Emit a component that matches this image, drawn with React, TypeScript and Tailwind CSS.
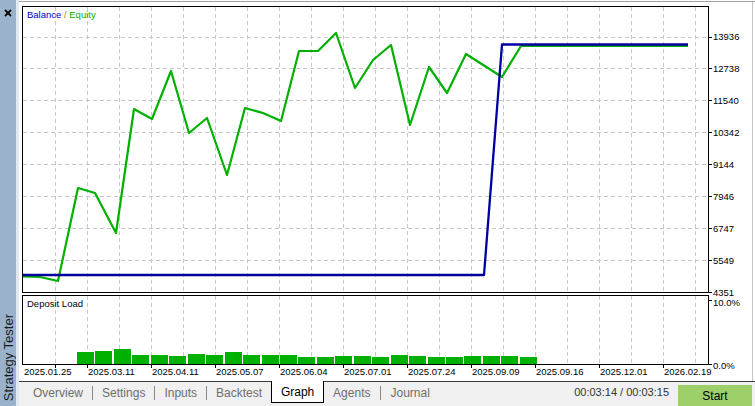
import React from "react";

const FONT = "'Liberation Sans', Arial, sans-serif";

const priceLabels = ["13936", "12738", "11540", "10342", "9144", "7946", "6747", "5549", "4351"];
const dates = [
  "2025.01.25",
  "2025.03.11",
  "2025.04.11",
  "2025.05.07",
  "2025.06.04",
  "2025.07.01",
  "2025.07.24",
  "2025.09.09",
  "2025.09.16",
  "2025.12.01",
  "2026.02.19",
];

const equity: [number, number][] = [
  [23, 276.5], [40, 277], [58, 281], [78, 188], [95, 193], [116, 233], [134, 109],
  [152, 119], [171, 71], [189, 133], [207, 118], [227, 175], [245, 108], [263, 113],
  [281, 121], [299, 51], [318, 51], [336, 33], [355, 88], [373, 60], [391, 45],
  [410, 125], [429, 67], [447, 93], [466, 54], [502, 77], [521, 46], [688, 46],
];

const balance: [number, number][] = [[23, 275], [484, 275], [502, 44.5], [688, 44.5]];

// top y of each deposit load bar, bottom sits on the frame
const loadTops = [
  352, 351, 349, 355, 355, 356, 354, 355, 352, 355, 355, 355, 357, 357, 356, 356, 357,
  355, 356, 357, 357, 356, 356, 356, 357,
];

const tickY = (i: number) => 36.5 + 31.95 * i;
const pts = (p: [number, number][]) => p.map(([x, y]) => `${x},${y}`).join(" ");

function Chart() {
  const vGrid: number[] = [];
  for (let x = 55.5; x < 708; x += 32) vGrid.push(x);

  return (
    <svg width={733} height={379} viewBox="19 2 733 379" style={{ fontFamily: FONT }}>
      {/* grid main */}
      <g stroke="#c8c8c8" strokeDasharray="4 3" shapeRendering="crispEdges">
        {priceLabels.slice(0, 8).map((_, i) => (
          <line key={i} x1={23} x2={708} y1={Math.round(tickY(i)) + 0.5} y2={Math.round(tickY(i)) + 0.5} />
        ))}
        {vGrid.map((x) => (
          <line key={"v" + x} x1={x} x2={x} y1={7} y2={292} />
        ))}
        {vGrid.map((x) => (
          <line key={"d" + x} x1={x} x2={x} y1={296} y2={364} />
        ))}
      </g>

      {/* lines */}
      <polyline points={pts(equity)} fill="none" stroke="#00b000" strokeWidth={2.2} strokeLinejoin="round" />
      <polyline points={pts(balance)} fill="none" stroke="#0000a0" strokeWidth={2.3} strokeLinejoin="round" />

      {/* deposit load bars */}
      <g fill="#00b000" shapeRendering="crispEdges">
        {loadTops.map((t, i) => {
          const x = Math.round(77 + 18.45 * i);
          return <rect key={i} x={x} y={t} width={17} height={364 - t} />;
        })}
      </g>

      {/* frames */}
      <g fill="none" stroke="#000" shapeRendering="crispEdges">
        <rect x={22.5} y={6.5} width={686} height={286} />
        <rect x={22.5} y={295.5} width={686} height={69} />
        {priceLabels.map((_, i) => (
          <line key={i} x1={708} x2={712} y1={Math.round(tickY(i)) + 0.5} y2={Math.round(tickY(i)) + 0.5} />
        ))}
        <line x1={708} x2={712} y1={300.5} y2={300.5} />
        <line x1={708} x2={712} y1={364.5} y2={364.5} />
        <line x1={55.5} x2={55.5} y1={365} y2={368} />
        {dates.slice(1).map((_, i) => (
          <line key={"t" + i} x1={87.5 + 64 * i} x2={87.5 + 64 * i} y1={365} y2={368} />
        ))}
      </g>

      {/* texts */}
      <text x={27} y={17.5} fontSize={9.5}>
        <tspan fill="#0000c8">Balance</tspan>
        <tspan fill="#c87800"> / </tspan>
        <tspan fill="#00b000">Equity</tspan>
      </text>
      <text x={27} y={306.5} fontSize={9.5} fill="#000">
        Deposit Load
      </text>
      <g fontSize={9.5} fill="#000">
        {priceLabels.map((p, i) => (
          <text key={p} x={713} y={tickY(i) + 3.5}>
            {p}
          </text>
        ))}
        <text x={713} y={305.5}>10.0%</text>
        <text x={713} y={369}>0.0%</text>
        {dates.map((d, i) => (
          <text key={d} x={24 + 64 * i} y={374.5}>
            {d}
          </text>
        ))}
      </g>
    </svg>
  );
}

function Sep() {
  return <span className="h-[14px] w-px bg-[#8a8a8a]" />;
}

export default function App() {
  return (
    <div
      className="flex h-[406px] w-[755px] overflow-hidden bg-white"
      style={{ fontFamily: FONT }}
    >
      <aside className="flex w-4 flex-col items-center justify-between bg-[#9bb2cd] pb-[5px] pt-[9px]">
        <svg width={8} height={8} viewBox="0 0 8 8">
          <path d="M1 1L7 7M7 1L1 7" stroke="#000" strokeWidth={1.8} />
        </svg>
        <span className="rotate-180 text-[13px] leading-none text-[#1a1a1a] [writing-mode:vertical-rl]">
          Strategy Tester
        </span>
      </aside>
      <div className="w-[3px] bg-[#e1e8f0]" />
      <div className="flex flex-1 flex-col">
        <div className="mt-px h-px bg-[#a0a0a0]" />
        <div className="mr-[2px] flex h-[379px] border-r border-[#c4c4c4]">
          <Chart />
        </div>
        <div className="flex h-[25px] items-start border-t border-[#3c3c3c] bg-[#f0f0f0] text-[12px] text-[#6e6e6e]">
          <div className="flex h-[21px] items-center pl-[14px]">
            <span className="pr-[9px]">Overview</span>
            <Sep />
            <span className="px-[9px]">Settings</span>
            <Sep />
            <span className="px-[9px]">Inputs</span>
            <Sep />
            <span className="pl-[9px] pr-[9px]">Backtest</span>
            <span className="-mt-px flex h-[22px] w-[53px] items-center justify-center self-start border border-t-0 border-black bg-white text-black">
              Graph
            </span>
            <span className="pl-[9px] pr-[10px]">Agents</span>
            <Sep />
            <span className="px-[9px]">Journal</span>
          </div>
          <div className="ml-auto flex h-full items-start">
            <span className="mr-[9px] flex h-[21px] items-center text-[11px] text-[#333]">
              00:03:14 / 00:03:15
            </span>
            <span className="mr-[3px] mt-[3px] flex h-[21px] w-[74px] items-center justify-center bg-[#9ccf69] text-[12px] text-black">
              Start
            </span>
          </div>
        </div>
      </div>
    </div>
  );
}
